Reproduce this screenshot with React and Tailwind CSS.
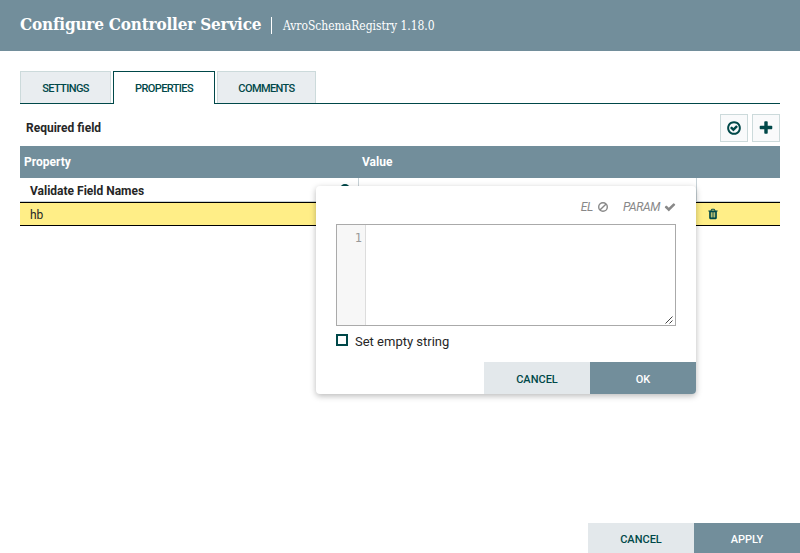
import React from 'react';

const paths = {
  checkCircle:
    'M1299 813l-422 422q-19 19-45 19t-45-19l-294-294q-19-19-19-45t19-45l102-102q19-19 45-19t45 19l147 147 275-275q19-19 45-19t45 19l102 102q19 19 19 45t-19 45zm141 83q0-148-73-273t-198-198-273-73-273 73-198 198-73 273 73 273 198 198 273 73 273-73 198-198 73-273zm224 0q0 209-103 385.5t-279.5 279.5-385.5 103-385.5-103-279.5-279.5-103-385.5 103-385.5 279.5-279.5 385.5-103 385.5 103 279.5 279.5 103 385.5z',
  plus: 'M1600 736v192q0 40-28 68t-68 28h-416v416q0 40-28 68t-68 28h-192q-40 0-68-28t-28-68v-416h-416q-40 0-68-28t-28-68v-192q0-40 28-68t68-28h416v-416q0-40 28-68t68-28h192q40 0 68 28t28 68v416h416q40 0 68 28t28 68z',
  trash:
    'M704 1376v-704q0-14-9-23t-23-9h-64q-14 0-23 9t-9 23v704q0 14 9 23t23 9h64q14 0 23-9t9-23zm256 0v-704q0-14-9-23t-23-9h-64q-14 0-23 9t-9 23v704q0 14 9 23t23 9h64q14 0 23-9t9-23zm256 0v-704q0-14-9-23t-23-9h-64q-14 0-23 9t-9 23v704q0 14 9 23t23 9h64q14 0 23-9t9-23zm-544-992h448l-48-117q-7-9-17-11h-317q-10 2-17 11zm928 32v64q0 14-9 23t-23 9h-96v948q0 83-47 143.5t-113 60.5h-832q-66 0-113-58.5t-47-141.5v-952h-96q-14 0-23-9t-9-23v-64q0-14 9-23t23-9h309l70-167q15-37 54-63t79-26h320q40 0 79 26t54 63l70 167h309q14 0 23 9t9 23z',
  check:
    'M1671 566q0 40-28 68l-724 724-136 136q-28 28-68 28t-68-28l-136-136-362-362q-28-28-28-68t28-68l136-136q28-28 68-28t68 28l294 295 656-657q28-28 68-28t68 28l136 136q28 28 28 68z',
};

function Icon({ name, className }) {
  return (
    <svg viewBox="0 0 1792 1792" fill="currentColor" className={className}>
      <path d={paths[name]} />
    </svg>
  );
}

function Ban({ className }) {
  return (
    <svg viewBox="0 0 12 12" fill="none" stroke="currentColor" strokeWidth="1.4" className={className}>
      <circle cx="6" cy="6" r="4.3" />
      <path d="M2.9 9.1 9.1 2.9" />
    </svg>
  );
}

function Actions({ confirm, className }) {
  return (
    <div className={`flex justify-end text-[11px] font-medium ${className}`}>
      <button className="w-[106px] bg-[#e3e8eb] pt-1 font-medium text-[#004849]">CANCEL</button>
      <button className="w-[106px] bg-[#728e9b] pt-1 font-medium text-white">{confirm}</button>
    </div>
  );
}

function Tabs() {
  return (
    <nav className="flex h-[33px] border-b border-[#004849] text-[11px] font-medium tracking-[-0.6px] text-[#004849]">
      <div className="mr-0.5 flex w-[91px] items-center justify-center border border-b-0 border-[#ccdadb] bg-[#e9edf0] pt-[3px]">SETTINGS</div>
      <div className="mr-0.5 flex h-[33px] w-[102px] items-center justify-center border border-b-0 border-[#004849] bg-white pt-0.5">PROPERTIES</div>
      <div className="flex w-[99px] items-center justify-center border border-b-0 border-[#ccdadb] bg-[#e9edf0] pt-[3px]">COMMENTS</div>
    </nav>
  );
}

function ValueEditor() {
  return (
    <div className="absolute left-[316px] top-[186px] flex h-[208px] w-[380px] flex-col overflow-visible rounded-sm bg-white shadow-[0_2px_6px_rgba(0,0,0,0.28)]">
      <div className="flex h-[38px] shrink-0 items-center justify-end pr-5 pt-1 text-[12px] italic leading-4 text-[#888]">
        <span className="tracking-[-0.3px]">EL</span>
        <Ban className="ml-1 h-3 w-3" />
        <span className="ml-3.5 tracking-[-0.4px]">PARAM</span>
        <Icon name="check" className="ml-1 h-3 w-3" />
      </div>
      <div className="mx-5 flex h-[102px] shrink-0 border border-[#aaa]">
        <div className="w-[29px] border-r border-[#ddd] bg-[#f7f7f7] pr-[3px] pt-[5px] text-right font-['DejaVu_Sans_Mono',monospace] text-[12px] leading-4 text-[#999]">1</div>
        <div className="flex flex-1 items-end justify-end pb-px pr-0.5">
          <svg viewBox="0 0 8 8" className="h-2 w-2" fill="none" stroke="#444" strokeWidth="1">
            <path d="M.5 7.5l7-7M4.5 7.5l3-3" />
          </svg>
        </div>
      </div>
      <label className="ml-5 mt-2 flex text-[13px] leading-4 text-[#262626]">
        <span className="h-3 w-3 border-2 border-[#004849]" />
        <span className="ml-[7px]">Set empty string</span>
      </label>
      <Actions confirm="OK" className="mt-auto h-8 overflow-hidden rounded-b-sm" />
    </div>
  );
}

export default function App() {
  return (
    <div className="relative flex h-[553px] w-[800px] flex-col overflow-hidden bg-white font-['Roboto',sans-serif] text-[#262626]">
      <header className="flex h-[51px] shrink-0 items-center bg-[#728e9b] px-5 pb-1 font-['Roboto_Slab','DejaVu_Serif_Condensed','DejaVu_Serif',serif] text-white">
        <h1 className="w-[241px] whitespace-nowrap text-[17px] font-bold leading-6 tracking-[-0.2px]">Configure Controller Service</h1>
        <span className="ml-[10px] mt-1 h-[17px] w-px bg-white" />
        <span className="ml-[11px] mt-1 whitespace-nowrap text-[12px] tracking-[-0.03px]">AvroSchemaRegistry 1.18.0</span>
      </header>
      <main className="flex flex-1 flex-col px-5 pt-5">
        <Tabs />
        <div className="flex h-[42px] items-end justify-between pb-1">
          <span className="self-center pl-1.5 pt-[9px] text-[12px] font-bold leading-4">Required field</span>
          <div className="flex gap-1 text-[#004849]">
            <button className="flex h-7 w-7 items-center justify-center border border-[#ccdadb] bg-[#f9fafb]">
              <Icon name="checkCircle" className="h-4 w-4" />
            </button>
            <button className="flex h-7 w-7 items-center justify-center border border-[#ccdadb] bg-[#f9fafb]">
              <Icon name="plus" className="h-4 w-4" />
            </button>
          </div>
        </div>
        <div className="flex h-8 items-center bg-[#728e9b] text-[12px] font-bold text-white">
          <span className="w-[338px] pl-1">Property</span>
          <span className="pl-1">Value</span>
        </div>
        <div className="flex h-6 border-b border-[#c7d2d7] text-[12px] font-bold">
          <div className="flex w-[339px] justify-between border-r border-[#c7d2d7] pl-2.5 pr-2">
            <span className="pt-[5px] leading-4">Validate Field Names</span>
            <span className="mt-1.5 h-[10px] w-[10px] rounded-full bg-[#004849]" />
          </div>
          <div className="w-[338px] border-r border-[#c7d2d7]" />
        </div>
        <div className="flex h-6 items-center border-y border-black bg-[#ffee87] text-[12px]">
          <span className="w-[687px] pl-2.5 pt-0.5">hb</span>
          <Icon name="trash" className="h-3 w-3 text-[#004849]" />
        </div>
      </main>
      <Actions confirm="APPLY" className="h-[30px]" />
      <ValueEditor />
    </div>
  );
}
